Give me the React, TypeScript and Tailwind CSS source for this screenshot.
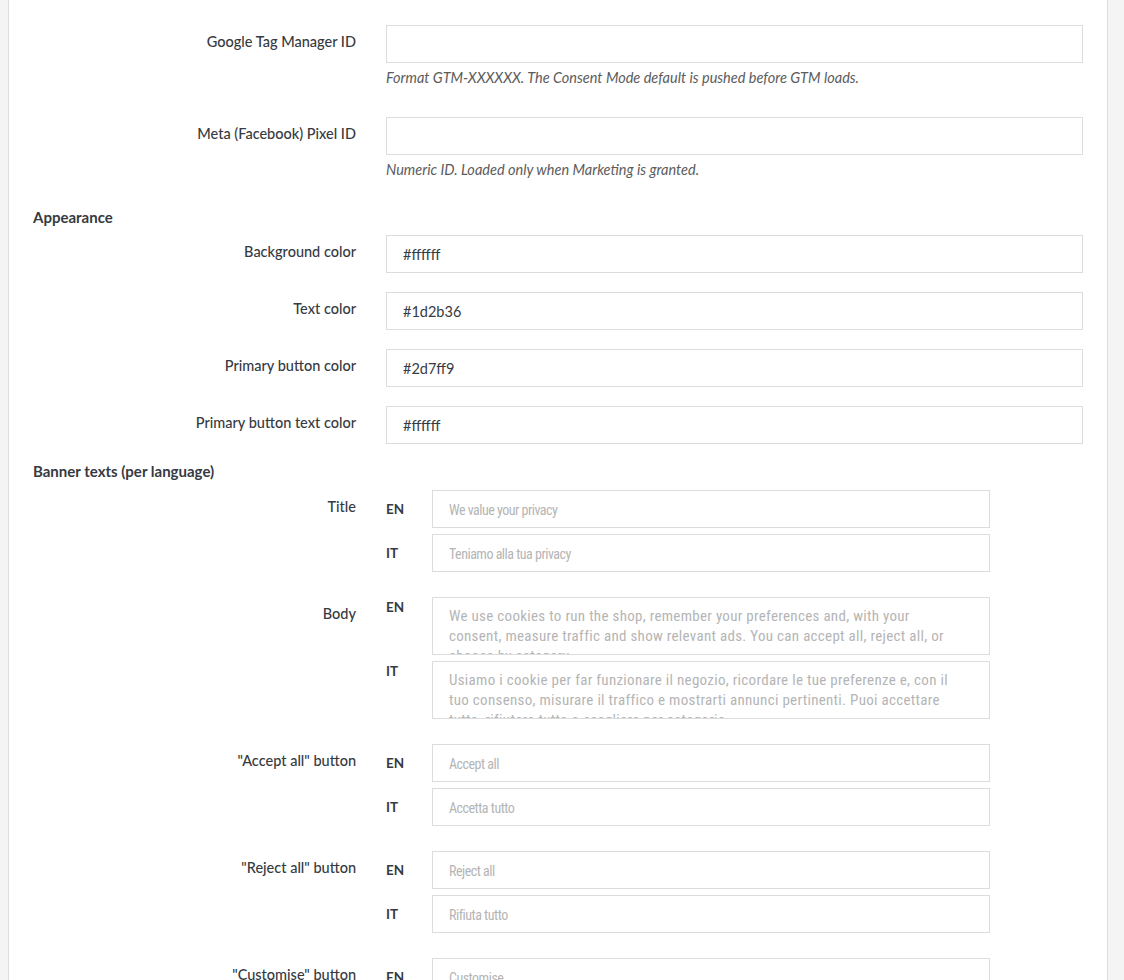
import React from 'react';

const labelFont = "font-['Lato','Noto_Sans',sans-serif]";
const phFont =
  "placeholder:font-['Roboto_Condensed','Liberation_Sans_Narrow','Roboto',sans-serif] placeholder:text-[#b5b5b5]";

const Row = ({ label, children }: { label: string; children: React.ReactNode }) => (
  <div className="flex mb-[19px]">
    <div className={`w-[353px] shrink-0 pr-[30px] pt-[7px] text-right text-[14.5px] leading-5 font-medium text-[#363a41] ${labelFont}`}>
      {label}
    </div>
    <div className="flex-1 min-w-0">{children}</div>
  </div>
);

const TextInput = ({ value = '', placeholder = '' }: { value?: string; placeholder?: string }) => (
  <input
    readOnly
    value={value}
    placeholder={placeholder}
    className={`block w-full h-[38px] border border-[#dcdcdc] bg-white px-4 text-[14.5px] text-[#363a41] placeholder:text-[14px] placeholder:tracking-[-0.5px] outline-none ${labelFont} ${phFont}`}
  />
);

const Help = ({ children }: { children: React.ReactNode }) => (
  <p className={`mt-[5px] mb-[10px] text-[14.5px] leading-5 italic text-[#5c5c5c] ${labelFont}`}>{children}</p>
);

const Header = ({ children, className = 'mb-[10px]' }: { children: React.ReactNode; className?: string }) => (
  <div className={`text-[15px] leading-4 font-bold text-[#363a41] ${className} ${labelFont}`}>{children}</div>
);

type Lang = { code: string; placeholder: string };

const LangFields = ({ langs, multiline = false }: { langs: Lang[]; multiline?: boolean }) => (
  <div className="flex flex-col gap-[6px] mb-[6px]">
    {langs.map((l) => (
      <div key={l.code} className={`flex ${multiline ? 'items-start' : 'items-center'}`}>
        <div className={`w-[46px] shrink-0 text-[13.5px] leading-5 font-bold text-[#363a41] ${labelFont}`}>{l.code}</div>
        <div className="w-[558px]">
          {multiline ? (
            <textarea
              readOnly
              placeholder={l.placeholder}
              className={`block w-full h-[58px] resize-none overflow-hidden border border-[#dcdcdc] bg-white pl-4 pr-6 pt-2 text-[15px] tracking-[0.3px] leading-5 outline-none ${labelFont} ${phFont}`}
            />
          ) : (
            <TextInput placeholder={l.placeholder} />
          )}
        </div>
      </div>
    ))}
  </div>
);

export default function App() {
  return (
    <div className="min-h-screen bg-[#f4f4f4] pl-2">
      <div className="w-[1100px] bg-white border-x border-[#dddddd] px-6 pt-[25px] pb-10">
        <Row label="Google Tag Manager ID">
          <TextInput />
          <Help>Format GTM-XXXXXX. The Consent Mode default is pushed before GTM loads.</Help>
        </Row>
        <Row label="Meta (Facebook) Pixel ID">
          <TextInput />
          <Help>Numeric ID. Loaded only when Marketing is granted.</Help>
        </Row>

        <Header>Appearance</Header>
        <Row label="Background color">
          <TextInput value="#ffffff" />
        </Row>
        <Row label="Text color">
          <TextInput value="#1d2b36" />
        </Row>
        <Row label="Primary button color">
          <TextInput value="#2d7ff9" />
        </Row>
        <Row label="Primary button text color">
          <TextInput value="#ffffff" />
        </Row>

        <Header className="mb-[11px]">Banner texts (per language)</Header>
        <Row label="Title">
          <LangFields
            langs={[
              { code: 'EN', placeholder: 'We value your privacy' },
              { code: 'IT', placeholder: 'Teniamo alla tua privacy' },
            ]}
          />
        </Row>
        <Row label="Body">
          <LangFields
            multiline
            langs={[
              {
                code: 'EN',
                placeholder:
                  'We use cookies to run the shop, remember your preferences and, with your consent, measure traffic and show relevant ads. You can accept all, reject all, or choose by category.',
              },
              {
                code: 'IT',
                placeholder:
                  'Usiamo i cookie per far funzionare il negozio, ricordare le tue preferenze e, con il tuo consenso, misurare il traffico e mostrarti annunci pertinenti. Puoi accettare tutto, rifiutare tutto o scegliere per categoria.',
              },
            ]}
          />
        </Row>
        <Row label={'"Accept all" button'}>
          <LangFields
            langs={[
              { code: 'EN', placeholder: 'Accept all' },
              { code: 'IT', placeholder: 'Accetta tutto' },
            ]}
          />
        </Row>
        <Row label={'"Reject all" button'}>
          <LangFields
            langs={[
              { code: 'EN', placeholder: 'Reject all' },
              { code: 'IT', placeholder: 'Rifiuta tutto' },
            ]}
          />
        </Row>
        <Row label={'"Customise" button'}>
          <LangFields
            langs={[
              { code: 'EN', placeholder: 'Customise' },
              { code: 'IT', placeholder: 'Personalizza' },
            ]}
          />
        </Row>
      </div>
    </div>
  );
}
